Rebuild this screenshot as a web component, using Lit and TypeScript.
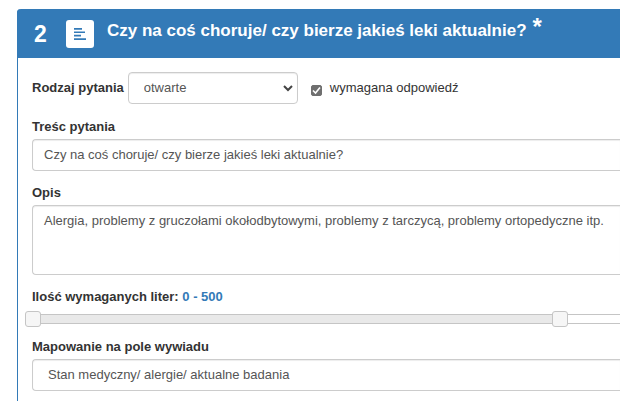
import { LitElement, html, css } from "lit";
import { customElement, state } from "lit/decorators.js";
import { styleMap } from "lit/directives/style-map.js";

const MAX_LETTERS = 549;

@customElement("app-root")
export class AppRoot extends LitElement {
  @state() private minLetters = 0;
  @state() private maxLetters = 500;

  static styles = css`
    :host {
      display: flex;
      min-height: 100vh;
      padding: 9px 0 0 17px;
      box-sizing: border-box;
      overflow: hidden;
      background: #fff;
      color: #333;
      font: 13px/18px "Liberation Sans", Arial, sans-serif;
    }
    * {
      box-sizing: border-box;
    }
    .panel {
      flex: 1;
      min-width: 0;
      border-left: 1px solid #337ab7;
      border-top-left-radius: 4px;
    }
    .header {
      display: flex;
      align-items: center;
      min-height: 49px;
      margin-left: -1px;
      padding: 0 17px;
      background: #337ab7;
      color: #fff;
      font-weight: bold;
      border-top-left-radius: 4px;
    }
    .number {
      width: 32px;
      font-size: 23px;
      line-height: 28px;
    }
    .type {
      display: flex;
      align-items: center;
      justify-content: center;
      width: 28px;
      height: 28px;
      padding: 0;
      border: 0;
      border-radius: 3px;
      background: #fff;
      color: #337ab7;
    }
    .title {
      display: flex;
      align-items: flex-start;
      gap: 6px;
      margin: 0 0 0 13px;
      padding-bottom: 6px;
      font-size: 17px;
      line-height: 20px;
    }
    .star {
      font-size: 24px;
      line-height: 12px;
    }
    .body {
      padding: 14px 0 9px 14px;
    }
    .row {
      display: flex;
      align-items: center;
      gap: 4px;
      margin-bottom: 14px;
    }
    .field {
      display: flex;
      flex-direction: column;
      gap: 3px;
      margin-bottom: 13px;
    }
    .field.range {
      margin-bottom: 11px;
    }
    .label {
      font-weight: bold;
    }
    .value {
      color: #337ab7;
    }
    .control {
      display: block;
      width: 100%;
      height: 32px;
      margin: 0;
      padding: 0 11px;
      border: 1px solid #ccc;
      border-right: 0;
      border-radius: 4px 0 0 4px;
      background: #fff;
      box-shadow: inset 0 1px 1px rgba(0, 0, 0, 0.075);
      color: #555;
      font: inherit;
      outline: 0;
    }
    input.control {
      padding-bottom: 2px;
    }
    textarea.control {
      height: 70px;
      padding: 6px 11px;
      resize: none;
      overflow: hidden;
    }
    select.control {
      appearance: none;
      padding: 0 15px;
    }
    .picker {
      display: grid;
      width: 170px;
    }
    .picker > * {
      grid-area: 1 / 1;
    }
    .picker .control {
      border-right: 1px solid #ccc;
      border-radius: 4px;
    }
    .chevron {
      place-self: center end;
      margin-right: 5px;
      pointer-events: none;
    }
    .check {
      display: flex;
      align-items: center;
      gap: 8px;
      margin-left: 9px;
    }
    .check input {
      appearance: none;
      width: 11px;
      height: 11px;
      margin: 4px 0 0;
      border: 1px solid #767676;
      border-radius: 2px;
      background: #fff;
    }
    .tick {
      display: grid;
    }
    .tick > * {
      grid-area: 1 / 1;
    }
    .tick svg {
      margin-top: 4px;
      pointer-events: none;
    }
    .check input:checked {
      background: #6f6f6f;
      border-color: #6f6f6f;
    }
    .check input:not(:checked) + svg {
      visibility: hidden;
    }
    .slider {
      position: relative;
      height: 16px;
      margin: 2px 0 0 -7px;
    }
    .track {
      position: absolute;
      inset: 3px 0 3px 7px;
      border: solid #c5c5c5;
      border-width: 1px 0 1px 1px;
      background: #fff;
    }
    .fill {
      height: 100%;
      background: #e9e9e9;
    }
    .slider input {
      appearance: none;
      position: absolute;
      inset: 0;
      width: 100%;
      height: 16px;
      margin: 0;
      background: transparent;
      pointer-events: none;
      outline: 0;
    }
    .slider input::-webkit-slider-thumb {
      appearance: none;
      box-sizing: border-box;
      width: 16px;
      height: 16px;
      border: 1px solid #c5c5c5;
      border-radius: 3px;
      background: #f6f6f6;
      pointer-events: auto;
    }
  `;

  private setMin(e: Event) {
    const input = e.target as HTMLInputElement;
    this.minLetters = Math.min(Number(input.value), this.maxLetters);
    input.value = String(this.minLetters);
  }

  private setMax(e: Event) {
    const input = e.target as HTMLInputElement;
    this.maxLetters = Math.max(Number(input.value), this.minLetters);
    input.value = String(this.maxLetters);
  }

  render() {
    const fill = {
      marginLeft: `${(this.minLetters / MAX_LETTERS) * 100}%`,
      width: `${((this.maxLetters - this.minLetters) / MAX_LETTERS) * 100}%`,
    };
    return html`
      <section class="panel">
        <header class="header">
          <span class="number">2</span>
          <button class="type" type="button" aria-label="Typ pytania">
            <svg width="12" height="12" viewBox="0 0 12 12" fill="currentColor" aria-hidden="true">
              <path d="M0 0h8v1.7H0zM0 3.4h11v1.7H0zM0 6.8h7v1.7H0zM0 10.2h12v1.7H0z" />
            </svg>
          </button>
          <h1 class="title">
            <span>Czy na coś choruje/ czy bierze jakieś leki aktualnie?</span>
            <span class="star">*</span>
          </h1>
        </header>
        <form class="body">
          <div class="row">
            <label class="label" for="kind">Rodzaj pytania</label>
            <div class="picker">
              <select class="control" id="kind">
                <option>otwarte</option>
              </select>
              <svg class="chevron" width="10" height="7" viewBox="0 0 10 7" aria-hidden="true">
                <path d="M1 1l4 4 4-4" fill="none" stroke="#444" stroke-width="2" />
              </svg>
            </div>
            <label class="check">
              <span class="tick">
                <input type="checkbox" checked />
                <svg width="11" height="11" viewBox="0 0 11 11" aria-hidden="true">
                  <path d="M2 5.5l2.5 2.5 4.5-5.5" fill="none" stroke="#fff" stroke-width="1.6" />
                </svg>
              </span>
              wymagana odpowiedź
            </label>
          </div>
          <div class="field">
            <label class="label" for="text">Treśc pytania</label>
            <input
              class="control"
              id="text"
              type="text"
              value="Czy na coś choruje/ czy bierze jakieś leki aktualnie?"
            />
          </div>
          <div class="field">
            <label class="label" for="note">Opis</label>
            <textarea
              class="control"
              id="note"
              .value=${"Alergia, problemy z gruczołami okołodbytowymi, problemy z tarczycą, problemy ortopedyczne itp."}
            ></textarea>
          </div>
          <div class="field range">
            <label class="label" for="min">
              Ilość wymaganych liter:
              <span class="value">${this.minLetters} - ${this.maxLetters}</span>
            </label>
            <div class="slider">
              <div class="track"><div class="fill" style=${styleMap(fill)}></div></div>
              <input
                id="min"
                type="range"
                min="0"
                max=${MAX_LETTERS}
                .value=${String(this.minLetters)}
                @input=${this.setMin}
              />
              <input
                type="range"
                aria-label="Maksymalna ilość liter"
                min="0"
                max=${MAX_LETTERS}
                .value=${String(this.maxLetters)}
                @input=${this.setMax}
              />
            </div>
          </div>
          <div class="field">
            <label class="label" for="map">Mapowanie na pole wywiadu</label>
            <select class="control" id="map">
              <option>Stan medyczny/ alergie/ aktualne badania</option>
            </select>
          </div>
        </form>
      </section>
    `;
  }
}
